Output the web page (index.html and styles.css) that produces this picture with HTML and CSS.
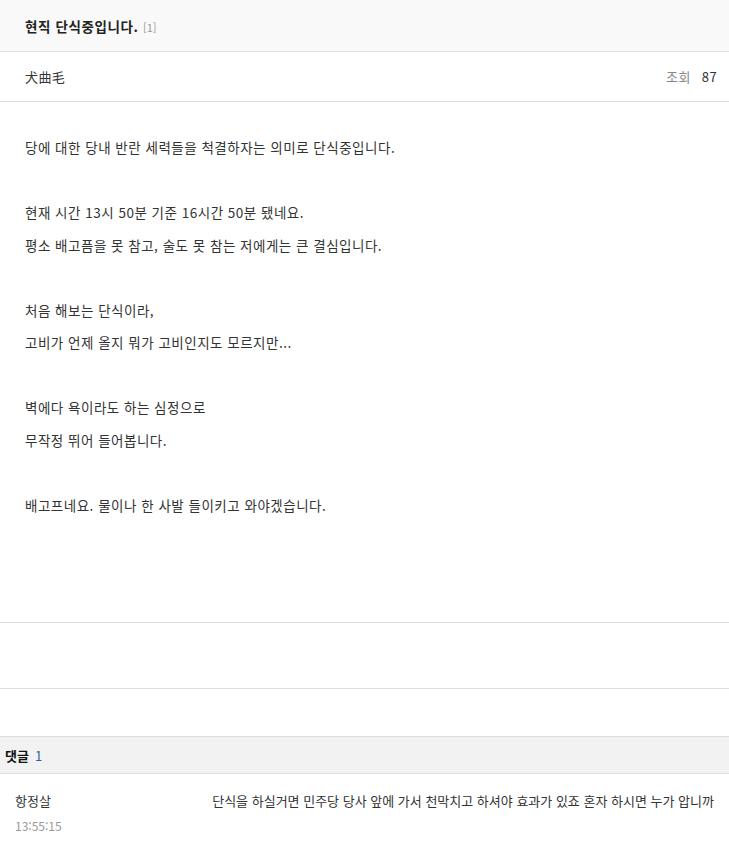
FILE: index.html
```html
<!DOCTYPE html>
<html lang="ko">
<head>
<meta charset="utf-8">
<link rel="stylesheet" href="styles.css">
</head>
<body>
<div class="post-head">
  <h1 class="title">현직 단식중입니다. <span class="cnt">[1]</span></h1>
</div>
<div class="meta">
  <span class="author">犬曲毛</span>
  <span class="views"><span class="vl">조회</span><span class="vn">87</span></span>
</div>
<div class="content">
  <p>당에 대한 당내 반란 세력들을 척결하자는 의미로 단식중입니다.</p>
  <p>&nbsp;</p>
  <p>현재 시간 13시 50분 기준 16시간 50분 됐네요.</p>
  <p>평소 배고픔을 못 참고, 술도 못 참는 저에게는 큰 결심입니다.</p>
  <p>&nbsp;</p>
  <p>처음 해보는 단식이라,</p>
  <p>고비가 언제 올지 뭐가 고비인지도 모르지만...</p>
  <p>&nbsp;</p>
  <p>벽에다 욕이라도 하는 심정으로</p>
  <p>무작정 뛰어 들어봅니다.</p>
  <p>&nbsp;</p>
  <p>배고프네요. 물이나 한 사발 들이키고 와야겠습니다.</p>
</div>
<div class="spacer"></div>
<div class="cmt-head">댓글 <span class="cmt-n">1</span></div>
<div class="cmt">
  <div class="cmt-left">
    <div class="cmt-name">항정살</div>
    <div class="cmt-time">13:55:15</div>
  </div>
  <div class="cmt-text">단식을 하실거면 민주당 당사 앞에 가서 천막치고 하셔야 효과가 있죠 혼자 하시면 누가 압니까</div>
</div>
</body>
</html>
```
FILE: styles.css
```css
* { box-sizing: border-box; }
body {
  margin: 0;
  font-family: "Noto Sans CJK KR", "Noto Sans", sans-serif;
  color: #333;
  background: #fff;
}
.post-head {
  background: #f9f9f9;
  height: 52px;
  border-bottom: 1px solid #ddd;
  padding: 0 25px;
  display: flex;
  align-items: center;
}
.title {
  margin: 0;
  font-size: 13.5px;
  font-weight: bold;
  color: #222;
  letter-spacing: 0.6px;
}
.cnt {
  font-weight: normal;
  font-size: 11px;
  color: #999;
  letter-spacing: 0;
}
.meta {
  height: 50px;
  border-bottom: 1px solid #ddd;
  padding: 0 12px 0 25px;
  display: flex;
  align-items: center;
  justify-content: space-between;
  font-size: 13px;
  letter-spacing: 0.4px;
}
.author { color: #333; }
.vl { color: #888; margin-right: 11px; }
.vn { color: #333; }
.content {
  padding: 29px 25px 0;
  height: 521px;
  border-bottom: 1px solid #ddd;
  font-size: 13.5px;
  color: #333;
  letter-spacing: 0.5px;
}
.content p {
  margin: 0;
  line-height: 32.5px;
}
.spacer {
  height: 66px;
  border-bottom: 1px solid #ddd;
}
.cmt-head {
  margin-top: 47px;
  height: 38px;
  background: #f2f2f2;
  border-top: 1px solid #ddd;
  border-bottom: 1px solid #ddd;
  padding: 0 5px;
  display: flex;
  align-items: center;
  font-size: 13px;
  font-weight: bold;
  color: #111;
}
.cmt-n { font-weight: normal; color: #2e5fa8; margin-left: 6px; }
.cmt {
  display: flex;
  justify-content: space-between;
  padding: 17px 15px 0 15px;
}
.cmt-name { font-size: 13px; color: #333; }
.cmt-time { font-size: 12px; color: #999; margin-top: 7px; }
.cmt-text { font-size: 13px; color: #333; }
```
